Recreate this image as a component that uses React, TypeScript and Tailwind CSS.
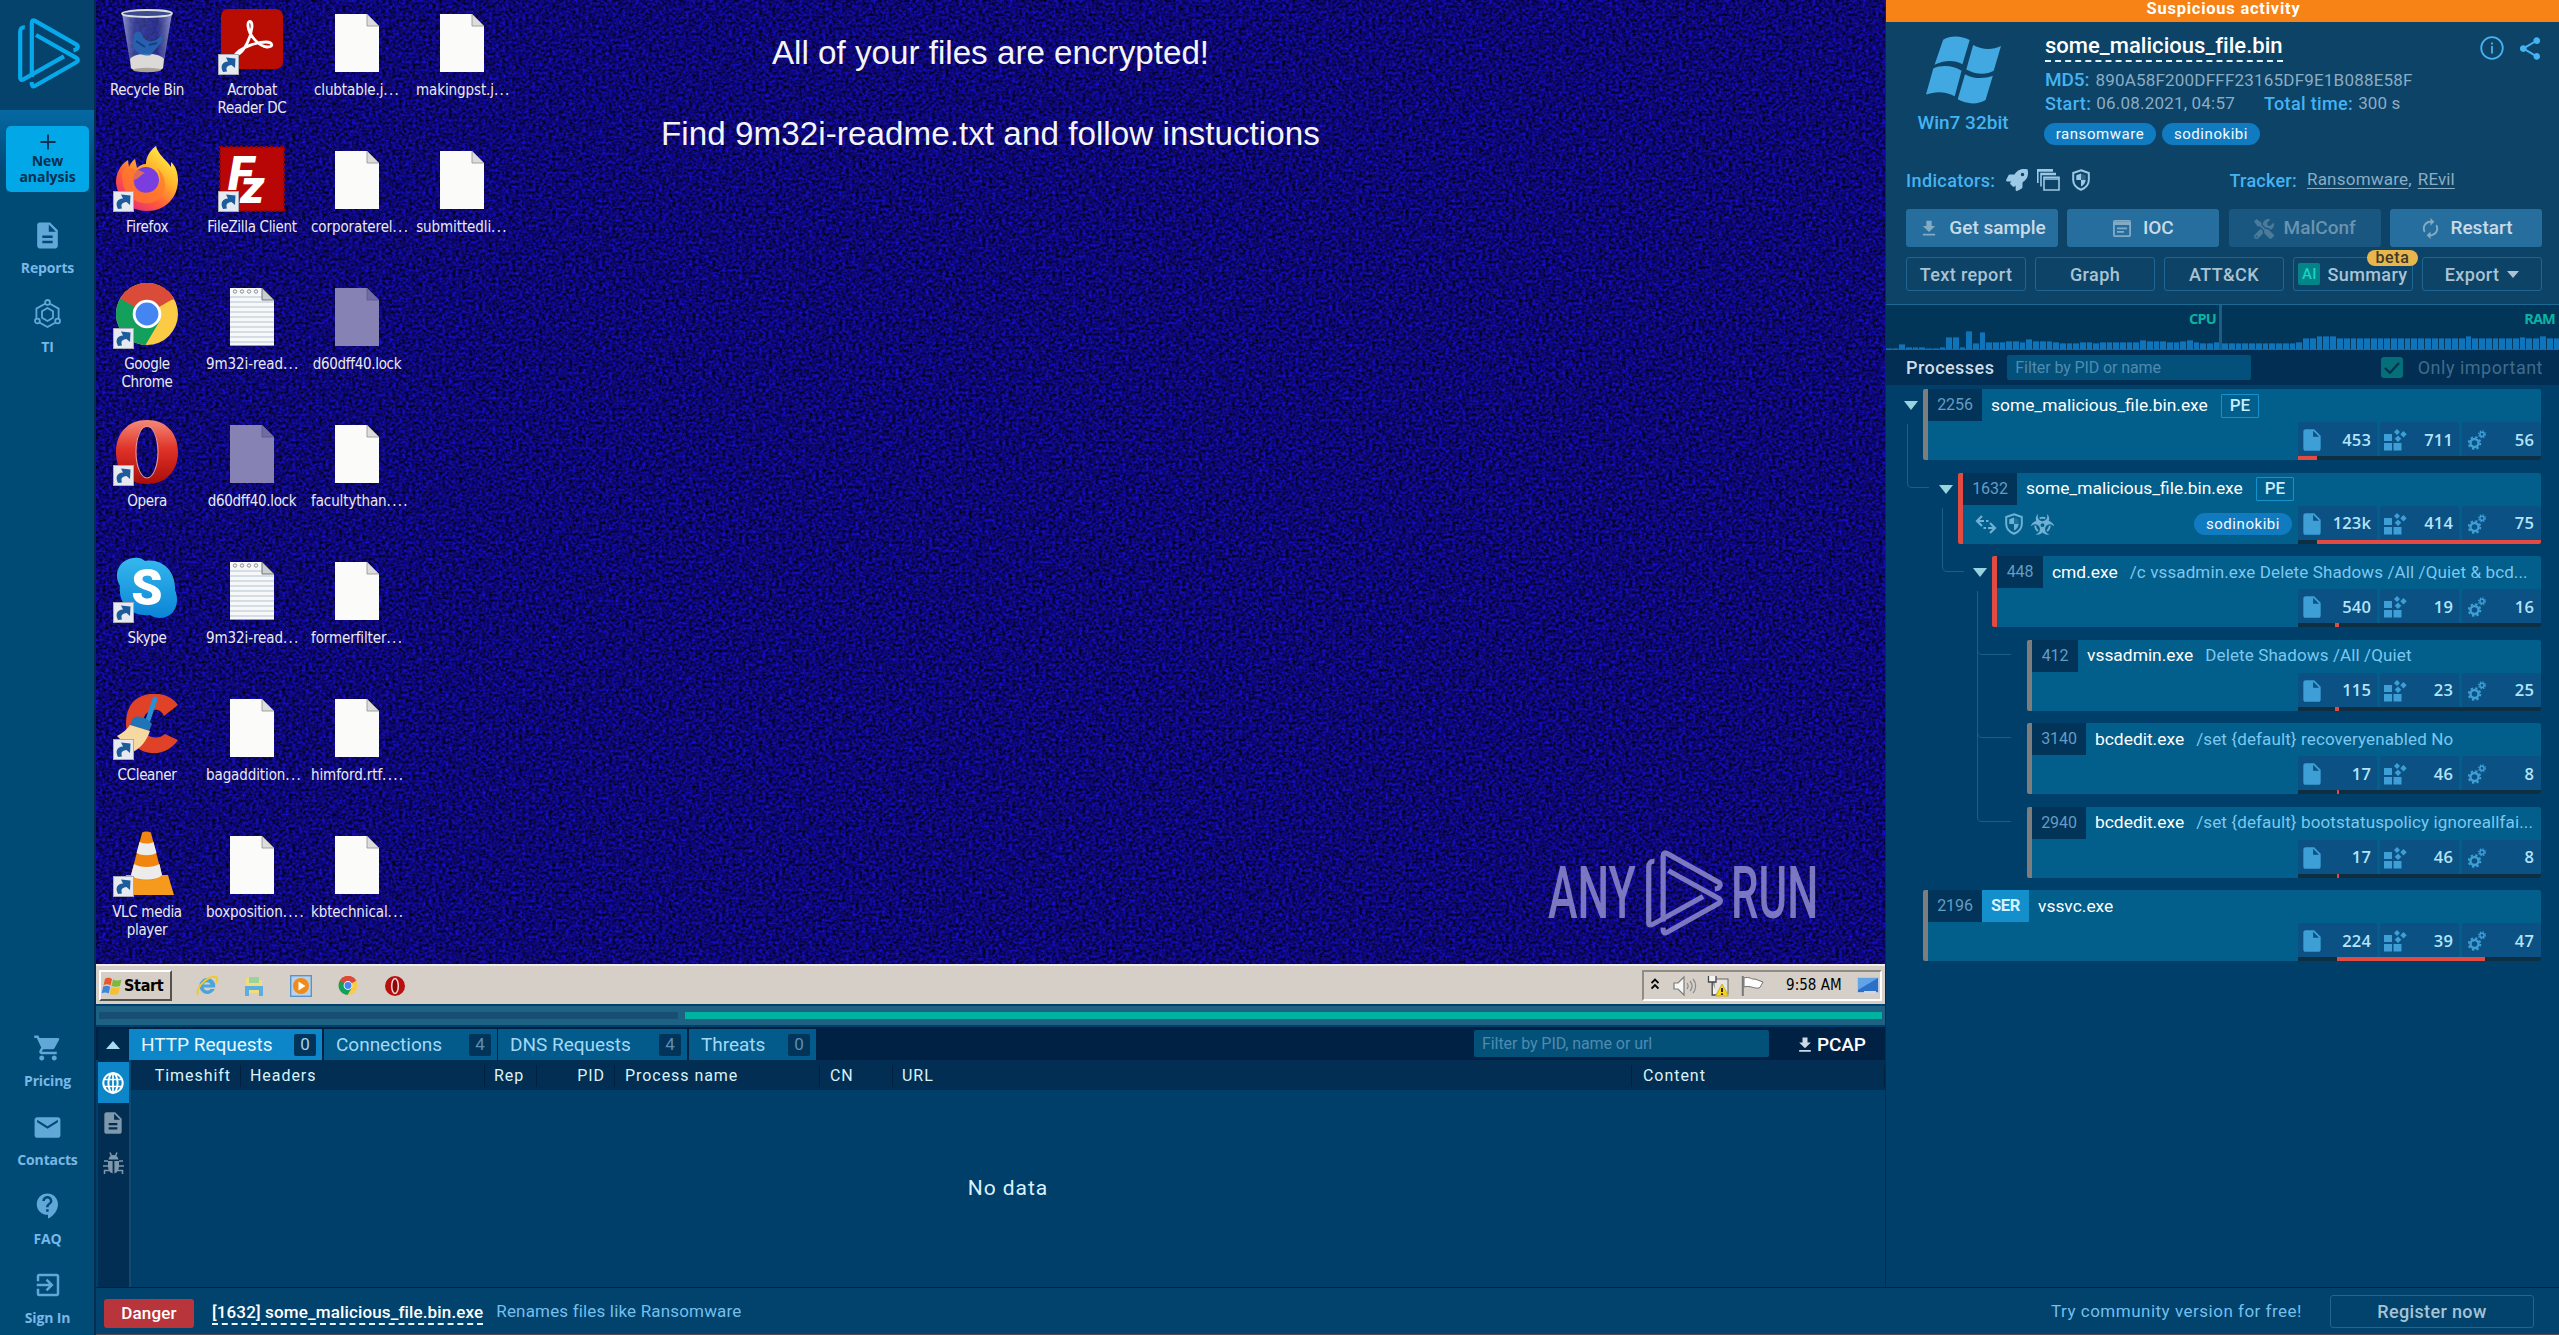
import type { ReactNode } from "react";
import {
  MdAutorenew,
  MdContactSupport,
  MdDescription,
  MdEmail,
  MdExitToApp,
  MdFileDownload,
  MdInsertDriveFile,
  MdShare,
  MdShoppingCart,
} from "react-icons/md";
import { FaBiohazard, FaRocket, FaTools } from "react-icons/fa";

/* ---------- Brand ---------- */

function PlayLogo({ className }: { className: string }) {
  return (
    <svg viewBox="0 0 62 71" className={className} fill="none" stroke="currentColor" strokeWidth="4.2" strokeLinejoin="round" strokeLinecap="butt" preserveAspectRatio="none">
      <path d="M6.8 9.3 C3.5 9 2.2 11 2.2 14 V60 C2.2 62 3.6 62.4 5.4 61.4 L46 38.4" />
      <path d="M13.8 59 V5 C13.8 2.4 15 1.7 17 2.9 L58.5 26.6 C60.6 28 60 31.8 55.4 32.2" />
      <path d="M18 17 L58.3 39.8 C60.4 41 60.4 43 58.3 44.2 L16.8 68 C14.8 69.2 13.6 68 13.8 64" />
    </svg>
  );
}

/* ---------- Left navigation ---------- */

function TiIcon() {
  return (
    <svg viewBox="0 0 27 30" className="h-[30px] w-[27px]" fill="none" stroke="currentColor" strokeWidth="1.8">
      <circle cx="13.5" cy="3.4" r="2.4" />
      <circle cx="3.4" cy="22" r="2.4" />
      <circle cx="23.6" cy="22" r="2.4" />
      <path d="M11 4.8 L2.4 9.6 V19.4 M16 4.8 L24.6 9.6 V19.4 M5.4 23.5 L13.5 28 L21.6 23.5" />
      <path d="M13.5 9 L19 12.3 V18.7 L13.5 22 L8 18.7 V12.3 Z" />
    </svg>
  );
}

function NavItem({ icon, label }: { icon: ReactNode; label: string }) {
  return (
    <div className="flex h-[79px] w-full flex-col items-center pl-px">
      <div className="flex h-[32px] items-center justify-center text-[#61a8d8]">{icon}</div>
      <div className="mt-[7px] text-[14px] leading-[20px] font-bold tracking-[-0.15px] text-[#78b7e6]">{label}</div>
    </div>
  );
}

function Sidebar() {
  return (
    <nav className="flex w-24 shrink-0 flex-col border-r-2 border-[#012d52] bg-[#004a76] font-['Open_Sans',sans-serif]">
      <div className="flex h-[110px] justify-center bg-[#05426c] pt-[18px]">
        <PlayLogo className="mr-[-3px] h-[71px] w-[62px] text-[#06aaeb]" />
      </div>
      <div className="flex h-[104px] w-full flex-col bg-linear-to-b from-[#0669a3] to-[#004a76] to-60% pt-4 pl-1.5">
        <div className="flex h-[66px] w-[83px] flex-col items-center rounded-[5px] bg-[#02a7e8] text-[#053050]">
          <svg viewBox="0 0 16 16" className="mt-2 h-4 w-4" stroke="currentColor" strokeWidth="1.8">
            <path d="M8 0.5 V15.5 M0.5 8 H15.5" />
          </svg>
          <div className="mt-[3px] text-center text-[14px] leading-[16px] font-bold tracking-[-0.05px]">
            New
            <br />
            analysis
          </div>
        </div>
      </div>
      <div className="flex flex-col pt-[5px]">
        <NavItem icon={<MdDescription className="h-[31px] w-[31px]" />} label="Reports" />
        <NavItem icon={<TiIcon />} label="TI" />
      </div>
      <div className="mt-auto -mb-[13px] flex flex-col">
        <NavItem icon={<MdShoppingCart className="h-[30px] w-[30px]" />} label="Pricing" />
        <NavItem icon={<MdEmail className="h-[31px] w-[31px]" />} label="Contacts" />
        <NavItem icon={<MdContactSupport className="h-[30px] w-[30px]" />} label="FAQ" />
        <NavItem icon={<MdExitToApp className="h-[30px] w-[30px]" />} label="Sign In" />
      </div>
    </nav>
  );
}

/* ---------- Remote desktop ---------- */

function Noise() {
  return (
    <svg className="absolute inset-0 h-full w-full">
      <filter id="grain" x="0" y="0" width="100%" height="100%" colorInterpolationFilters="sRGB">
        <feTurbulence type="fractalNoise" baseFrequency="0.3 0.36" numOctaves="3" seed="4" />
        <feColorMatrix values="0.12 0 0 0 -0.01  0.1 0 0 0 -0.02  1.15 0 0 0 -0.125  0 0 0 0 1" />
      </filter>
      <rect width="100%" height="100%" filter="url(#grain)" />
    </svg>
  );
}

function BlankFile() {
  return (
    <svg viewBox="0 0 44 58" className="mt-[5px] h-[58px] w-11">
      <path d="M0 0 H32 L44 12 V58 H0 Z" fill="#fbfbf9" />
      <path d="M32 0 V12 H44 Z" fill="#dcdcdc" stroke="#8f8f8f" strokeWidth="0.8" />
    </svg>
  );
}

function LockFile() {
  return (
    <svg viewBox="0 0 44 58" className="mt-[5px] h-[58px] w-11">
      <path d="M0 0 H32 L44 12 V58 H0 Z" fill="#8682b4" />
      <path d="M32 0 V12 H44 Z" fill="#6f6ba3" stroke="#5a568f" strokeWidth="0.8" />
    </svg>
  );
}

function NoteFile() {
  return (
    <svg viewBox="0 0 44 58" className="mt-[5px] h-[58px] w-11">
      <path d="M0 0 H32 L44 12 V58 H0 Z" fill="#f6f8fa" />
      {[9, 14, 19, 24, 29, 34, 39, 44, 49, 54].map((y) => (
        <path key={y} d={`M0 ${y} H${y < 12 ? 32 : 44}`} stroke="#b5c3cf" strokeWidth="1" />
      ))}
      {[5, 12, 19, 26].map((x) => (
        <circle key={x} cx={x} cy="3.5" r="1.7" fill="none" stroke="#8f8f8f" />
      ))}
      <path d="M32 0 V12 H44 Z" fill="#c9ced3" stroke="#6e7478" strokeWidth="1" />
      <path d="M0 57.5 H44" stroke="#9aa1a6" />
    </svg>
  );
}

function RecycleBin() {
  return (
    <svg viewBox="0 0 52 64" className="h-16 w-[52px]">
      <defs>
        <linearGradient id="binGlass" x1="0" y1="0" x2="1" y2="0">
          <stop offset="0" stopColor="#b9c6e2" stopOpacity="0.75" />
          <stop offset="0.25" stopColor="#5d6cae" stopOpacity="0.55" />
          <stop offset="0.7" stopColor="#43509c" stopOpacity="0.55" />
          <stop offset="1" stopColor="#b4bfdb" stopOpacity="0.75" />
        </linearGradient>
      </defs>
      <path d="M1 4 L10 59 C14 64 38 64 42 59 L51 4 Z" fill="url(#binGlass)" />
      <path d="M9 50 C14 43 38 43 43 50 L42 59 C38 64 14 64 10 59 Z" fill="#dcdad6" />
      <path d="M13 26 C15 20 21 22 22 28 C26 34 34 34 40 27 L42 30 C36 40 32 42 30 46 C22 48 14 44 12 36 Z" fill="#2467b4" opacity="0.85" />
      <path d="M15 32 L24 38 M28 36 L36 34" stroke="#123f86" strokeWidth="2" />
      <ellipse cx="26" cy="4.5" rx="25" ry="3.5" fill="#3d4a8c" stroke="#d9dde4" strokeWidth="1.8" />
      <ellipse cx="26" cy="61" rx="14" ry="2.2" fill="#a9a49a" />
    </svg>
  );
}

function Acrobat() {
  return (
    <svg viewBox="0 0 62 60" className="h-[60px] w-[62px]">
      <rect width="62" height="60" rx="7" fill="#b90d04" />
      <path d="M16 46 C24 42 30 28 31 18 C31.4 11 26.4 10.6 27 17 C28 27 38 37 46 38 C53 38.4 52 33 45 33 C36 33 25 37 18 42 C13 46 13 48 16 46 Z" fill="none" stroke="#fff" strokeWidth="2.8" />
    </svg>
  );
}

function Firefox() {
  return (
    <svg viewBox="0 0 64 66" className="h-[66px] w-16">
      <defs>
        <linearGradient id="ffBody" x1="0.85" y1="0.1" x2="0.2" y2="0.95">
          <stop offset="0" stopColor="#fff04a" />
          <stop offset="0.35" stopColor="#ffb02a" />
          <stop offset="0.68" stopColor="#ff5a3a" />
          <stop offset="1" stopColor="#e92a7a" />
        </linearGradient>
      </defs>
      <path d="M41 0 C32 7 31 14 31 18 C27 18 24 20 22 22 L20 13 C17 15 15 18 14 21 L13 14 C4 20 1 28 1 37 C3 54 15 65 32 65 C50 65 63 52 63 34 C63 28 61 20 56 16 L56 21 C52 14 43 9 41 0 Z" fill="url(#ffBody)" />
      <circle cx="31" cy="34" r="13" fill="#7a3ee0" />
      <path d="M8 24 C14 20 24 24 30 27 C25 29 24 33 19 34 C19 38 20 41 22 43 C28 50 42 47 44 36 C46 30 44 26 42 22 C54 32 53 53 36 57 C16 60 4 42 8 24 Z" fill="#ff7a2c" opacity="0.75" />
    </svg>
  );
}

function FileZilla() {
  return (
    <svg viewBox="0 0 66 66" className="h-[66px] w-[66px]">
      <rect x="1" y="1" width="64" height="64" fill="#b80606" stroke="#8d0505" strokeWidth="2" strokeDasharray="3 2" />
      <text x="9" y="44" fontFamily="Roboto, sans-serif" fontSize="48" fontWeight="900" fontStyle="italic" fill="#fff">
        F<tspan dx="-13" dy="13">z</tspan>
      </text>
    </svg>
  );
}

function Chrome({ className }: { className: string }) {
  return (
    <svg viewBox="0 0 62 62" className={className}>
      <circle cx="31" cy="31" r="31" fill="#fccb46" />
      <path d="M31 31 L4.2 15.5 A31 31 0 0 1 57.8 15.5 Z" fill="#db4b3a" />
      <path d="M31 16.5 H58.6 L57.8 15.5 A31 31 0 0 0 4.2 15.5 L18.4 38.2 Z" fill="#db4b3a" />
      <path d="M31 31 L4.2 15.5 A31 31 0 0 0 29.5 62 L43.6 38.2 Z" fill="#13a05c" />
      <circle cx="31" cy="31" r="14.3" fill="#fff" />
      <circle cx="31" cy="31" r="11.4" fill="#4585f2" />
    </svg>
  );
}

function Opera() {
  return (
    <svg viewBox="0 0 62 64" className="h-16 w-[62px]">
      <defs>
        <linearGradient id="opRing" x1="0" y1="0" x2="0" y2="1">
          <stop offset="0" stopColor="#f58a78" />
          <stop offset="0.45" stopColor="#e03228" />
          <stop offset="1" stopColor="#a90d0a" />
        </linearGradient>
      </defs>
      <path fillRule="evenodd" d="M31 0 C50 0 62 13 62 32 C62 51 50 64 31 64 C12 64 0 51 0 32 C0 13 12 0 31 0 Z M31 7 C23 7 20 18 20 32 C20 46 23 58 31 58 C39 58 42 46 42 32 C42 18 39 7 31 7 Z" fill="url(#opRing)" />
      <ellipse cx="31" cy="32" rx="11" ry="26" fill="none" stroke="#ef8f82" strokeWidth="1.2" />
    </svg>
  );
}

function Skype() {
  return (
    <svg viewBox="0 0 62 62" className="h-[62px] w-[62px]">
      <defs>
        <linearGradient id="skBody" x1="0" y1="0" x2="0" y2="1">
          <stop offset="0" stopColor="#35b8ee" />
          <stop offset="1" stopColor="#0a84d6" />
        </linearGradient>
      </defs>
      <path d="M17 1 C22 0 26 1 29 4 C46 1 60 14 59 33 C64 44 60 61 44 61 C40 61 37 60 34 58 C16 60 2 48 4 29 C-3 18 2 3 17 1 Z" fill="url(#skBody)" />
      <text x="31" y="48" textAnchor="middle" fontFamily="Roboto, sans-serif" fontSize="50" fontWeight="900" fill="#fff">S</text>
    </svg>
  );
}

function CCleaner() {
  return (
    <svg viewBox="0 0 64 60" className="h-[60px] w-16">
      <path d="M63 11 C54 -2 33 -4 20 6 C8 16 8 42 20 52 C34 64 54 60 63 46 L50 40 C43 46 32 44 29 36 C26 26 30 17 38 16 C44 15 47 18 49 22 Z" fill="#df4227" />
      <path d="M40 5 L33 26" stroke="#2b8fd3" strokeWidth="5" strokeLinecap="round" />
      <path d="M18 24 C23 20 33 24 37 30 L34 37 L15 31 Z" fill="#1f74b8" />
      <path d="M15 31 L35 37 C32 46 26 54 18 58 L2 42 C8 39 12 35 15 31 Z" fill="#f5d9a0" />
    </svg>
  );
}

function Vlc() {
  return (
    <svg viewBox="0 0 54 64" className="h-16 w-[54px]">
      <path d="M6 44 H48 L54 64 H0 Z" fill="#f59a1c" />
      <path d="M22 2 C23 0 30 0 31 2 L42 44 C38 51 15 51 11 44 Z" fill="#f2850f" />
      <path d="M19.5 11 C24 13 29 13 33.500 11 L36.500 22 C31 25 22 25 16.500 22 Z" fill="#ececec" />
      <path d="M14 33 C20 37 33 37 39.500 33 L42 44 C38 50 15 50 11 44 Z" fill="#ececec" />
    </svg>
  );
}

function Shortcut() {
  return (
    <svg viewBox="0 0 21 21" className="absolute bottom-0 left-[-1px] h-[21px] w-[21px]">
      <rect x="0.5" y="0.5" width="20" height="20" fill="#e6e9ef" stroke="#a8abb5" />
      <path d="M5 18 C2 12 4 8 10 7.500 L8 3.500 L17.500 4.500 L17 14 L13.500 11 C9 11.500 7.500 13.500 9 17.500 Z" fill="#1d5c9c" />
    </svg>
  );
}

type DesktopItem = { label: string; col: number; row: number; icon: ReactNode; shortcut?: boolean };

const desktop: DesktopItem[] = [
  { label: "Recycle Bin", col: 0, row: 0, icon: <RecycleBin /> },
  { label: "Firefox", col: 0, row: 1, icon: <Firefox />, shortcut: true },
  { label: "Google Chrome", col: 0, row: 2, icon: <Chrome className="h-[62px] w-[62px]" />, shortcut: true },
  { label: "Opera", col: 0, row: 3, icon: <Opera />, shortcut: true },
  { label: "Skype", col: 0, row: 4, icon: <Skype />, shortcut: true },
  { label: "CCleaner", col: 0, row: 5, icon: <CCleaner />, shortcut: true },
  { label: "VLC media player", col: 0, row: 6, icon: <Vlc />, shortcut: true },
  { label: "Acrobat Reader DC", col: 1, row: 0, icon: <Acrobat />, shortcut: true },
  { label: "FileZilla Client", col: 1, row: 1, icon: <FileZilla />, shortcut: true },
  { label: "9m32i-read...", col: 1, row: 2, icon: <NoteFile /> },
  { label: "d60dff40.lock", col: 1, row: 3, icon: <LockFile /> },
  { label: "9m32i-read...", col: 1, row: 4, icon: <NoteFile /> },
  { label: "bagaddition...", col: 1, row: 5, icon: <BlankFile /> },
  { label: "boxposition....", col: 1, row: 6, icon: <BlankFile /> },
  { label: "clubtable.j...", col: 2, row: 0, icon: <BlankFile /> },
  { label: "corporaterel...", col: 2, row: 1, icon: <BlankFile /> },
  { label: "d60dff40.lock", col: 2, row: 2, icon: <LockFile /> },
  { label: "facultythan....", col: 2, row: 3, icon: <BlankFile /> },
  { label: "formerfilter...", col: 2, row: 4, icon: <BlankFile /> },
  { label: "himford.rtf....", col: 2, row: 5, icon: <BlankFile /> },
  { label: "kbtechnical...", col: 2, row: 6, icon: <BlankFile /> },
  { label: "makingpst.j...", col: 3, row: 0, icon: <BlankFile /> },
  { label: "submittedli...", col: 3, row: 1, icon: <BlankFile /> },
];

function IconLabel({ text }: { text: string }) {
  const cut = text.search(/\.{3,}$/);
  if (cut < 0) return <span className="tracking-[-0.32px]">{text}</span>;
  return (
    <span className="tracking-[-0.1px] whitespace-nowrap">
      {text.slice(0, cut)}
      <span className="tracking-[1.3px]">{text.slice(cut)}</span>
    </span>
  );
}

function Taskbar() {
  return (
    <div className="relative flex h-10 items-center border-t-2 border-[#f1eeea] bg-[#d5cfc7] px-[3px] font-['DejaVu_Sans_Condensed','DejaVu_Sans',sans-serif] text-black">
      <div className="mt-px flex h-[31px] w-[73px] items-center border-2 border-t-white border-r-[#55524e] border-b-[#55524e] border-l-white">
        <svg viewBox="0 0 22 20" className="h-5 w-[22px]">
          <path d="M4 3 C7 1 9 2 11 3 L9.500 9.500 C7 8 5 8 2.500 9.300 Z" fill="#e8582a" />
          <path d="M12 3.500 C15 5 18 4.500 20.500 3.500 L19 10 C16 11 13 11 10.500 10 Z" fill="#7fb93c" />
          <path d="M2.200 10.500 C5 9.300 7 9.500 9.200 10.700 L7.700 17.500 C5 16 3 16.200 0.700 17.300 Z" fill="#3f86d8" />
          <path d="M10.200 11.300 C13 12.500 16 12.300 18.700 11.200 L17.200 18 C14 19 11.500 19 8.700 18 Z" fill="#f5bf2f" />
        </svg>
        <span className="ml-px text-[16px] leading-none font-bold tracking-[-0.3px]">Start</span>
      </div>
      <div className="mt-px ml-[24px] flex items-center gap-[25px]">
        <svg viewBox="0 0 22 22" className="h-[22px] w-[22px]">
          <path d="M11 3 A8 8 0 1 0 18.800 14 H14.500 A4 4 0 0 1 7.500 12.500 H19.200 A8 8 0 0 0 11 3 Z M7.600 9.500 A3.700 3.700 0 0 1 14.500 9.500 Z" fill="#49a5e0" fillRule="evenodd" />
          <path d="M2 20 C-1 13 12 0 20 2 C22 3 21 6 20 8" fill="none" stroke="#f0c832" strokeWidth="2" />
        </svg>
        <svg viewBox="0 0 22 22" className="h-[22px] w-[22px]">
          <path d="M3 3 H9 L11 5 H19 V18 H3 Z" fill="#f2dc7c" />
          <path d="M6 2 H16 V8 H6 Z" fill="#9bd49b" />
          <path d="M2 11 H20 V21 H16 V15 H6 V21 H2 Z" fill="#5aaee0" />
        </svg>
        <svg viewBox="0 0 22 22" className="h-[22px] w-[22px]">
          <rect x="0.700" y="0.700" width="20.600" height="20.600" fill="#b9d2ec" stroke="#5a93c8" strokeWidth="1.400" />
          <circle cx="11" cy="11" r="8" fill="#f28a17" />
          <path d="M8.500 6.500 L15.500 11 L8.500 15.500 Z" fill="#fff" />
        </svg>
        <Chrome className="h-[19px] w-[22px]" />
        <svg viewBox="0 0 22 22" className="h-[22px] w-[22px]">
          <circle cx="11" cy="11" r="10" fill="#b80f0f" />
          <ellipse cx="11" cy="11" rx="3.300" ry="7.500" fill="#8c0808" stroke="#f0dcd8" strokeWidth="1.500" />
        </svg>
      </div>
      <div className="mt-px ml-auto flex h-[31px] w-[240px] items-center border-2 border-t-[#8f8b85] border-r-white border-b-white border-l-[#8f8b85] pl-[7px]">
        <svg viewBox="0 0 8 12" className="-mt-[4px] h-3 w-2" fill="none" stroke="#000" strokeWidth="1.800">
          <path d="M0.500 5 L4 1.500 L7.500 5 M0.500 10.500 L4 7 L7.500 10.500" />
        </svg>
        <svg viewBox="0 0 24 22" className="ml-[14px] h-[22px] w-6" fill="none" stroke="#7b7b7b" strokeWidth="1.200">
          <path d="M1 8 H5 L11 2 V20 L5 14 H1 Z" fill="#f7f7f7" />
          <path d="M14 8 C15.500 10 15.500 12 14 14 M17 6 C19.500 9 19.500 13 17 16 M20 4 C23.500 8 23.500 14 20 18" stroke="#8a8a8a" />
        </svg>
        <svg viewBox="0 0 22 22" className="ml-[10px] h-[22px] w-[22px]">
          <rect x="7" y="4" width="14" height="15" fill="#e6e6e6" stroke="#666" />
          <path d="M1.500 1 V7 H9 V1 M5.200 7 V20 H10" fill="#f4f4f4" stroke="#444" strokeWidth="1.300" />
          <path d="M15 9 L21.500 21 H8.500 Z" fill="#f6d51e" stroke="#c7a50a" strokeWidth="0.800" />
          <path d="M15 13 V17 M15 18.300 V20" stroke="#000" strokeWidth="1.600" />
        </svg>
        <svg viewBox="0 0 23 22" className="ml-[12px] h-[22px] w-[23px]">
          <path d="M3 3 C8 1 11 5 14 4 L22 7 C20 10 20 12 18 13 C13 14 9 10 3 12 Z" fill="#fff" stroke="#6f6f6f" />
          <path d="M1.800 1 V21" stroke="#777" strokeWidth="2" />
        </svg>
        <span className="ml-[22px] text-[15px] leading-none tracking-[0.05px]">9:58 AM</span>
        <svg viewBox="0 0 22 18" className="ml-[15px] h-[18px] w-[22px]">
          <rect x="0.500" y="0.500" width="21" height="15" fill="#2c6fc4" stroke="#b9c6d8" />
          <path d="M1 1 H21 L1 13 Z" fill="#5fa4e8" />
          <rect x="7" y="14" width="12" height="3" fill="#cfd6df" />
        </svg>
      </div>
    </div>
  );
}

function RemoteDesktop() {
  return (
    <section className="flex h-[1004px] flex-col">
      <div className="relative h-[964px] overflow-hidden bg-[#0d0a74]">
        <Noise />
        <div className="relative flex flex-col items-center pt-[35px] font-['Liberation_Sans',sans-serif] text-[33.2px] leading-[36px] text-[#f4f4fb]">
          <p>All of your files are encrypted!</p>
          <p className="mt-[45px] tracking-[0.05px]">Find 9m32i-readme.txt and follow instuctions</p>
        </div>
        {desktop.map((d) => (
          <div
            key={`${d.col}-${d.row}`}
            className="absolute flex w-[106px] flex-col items-center"
            style={{ left: d.col * 105 - 2, top: 9 + d.row * 137 }}
          >
            <div className="relative flex h-[66px] w-[66px] items-start justify-center">
              {d.icon}
              {d.shortcut && <Shortcut />}
            </div>
            <div className="mt-[6px] max-w-[100px] px-1 text-center font-['DejaVu_Sans_Condensed','DejaVu_Sans',sans-serif] text-[15px] leading-[18px] text-[#e9e9f4]">
              <IconLabel text={d.label} />
            </div>
          </div>
        ))}
        <div className="absolute top-[850px] left-[1452px] flex items-center text-[#8f8bd0] opacity-85">
          <span className="flex w-[90px] font-['Roboto',sans-serif] text-[73px] leading-[86px] font-medium">
            <span className="origin-left scale-x-[0.61]">ANY</span>
          </span>
          <PlayLogo className="ml-[8px] h-[86px] w-[77px]" />
          <span className="ml-[8px] flex w-[90px] font-['Roboto',sans-serif] text-[73px] leading-[86px] font-medium">
            <span className="origin-left scale-x-[0.6]">RUN</span>
          </span>
        </div>
      </div>
      <Taskbar />
    </section>
  );
}

/* ---------- Network panel ---------- */

function GlobeIcon() {
  return (
    <svg viewBox="0 0 22 22" className="mr-px h-[22px] w-[22px]" fill="none" stroke="#fff" strokeWidth="2">
      <circle cx="11" cy="11" r="9.700" />
      <ellipse cx="11" cy="11" rx="4.600" ry="9.700" />
      <path d="M1.500 7.500 H20.500 M1.500 14.500 H20.500 M11 1.500 V20.500" strokeWidth="1.700" />
    </svg>
  );
}

function BugIcon() {
  return (
    <svg viewBox="0 0 21 23" className="mr-px h-[23px] w-[21px] text-[#8098ab]" stroke="currentColor" strokeWidth="1.500" fill="none">
      <path d="M5.500 7.500 C6 4.500 8 3 10.500 3 S15 4.500 15.500 7.500 Z" fill="currentColor" stroke="none" />
      <path d="M5 9 H9.600 V21.500 C6.500 20.500 5 18 5 14 Z M16 9 H11.400 V21.500 C14.500 20.500 16 18 16 14 Z" fill="currentColor" stroke="none" />
      <path d="M7 0.500 L8.500 4 M14 0.500 L12.500 4 M1 9 H5 M20 9 H16 M0 14 H5 M21 14 H16 M1.500 22 V18.500 H6 M19.500 22 V18.500 H15" />
    </svg>
  );
}

function Tab({ className, label, count, active }: { className: string; label: string; count: string; active?: boolean }) {
  return (
    <div className={`flex h-[31px] items-center justify-between pr-[6px] pl-3 text-[19px] tracking-[-0.02px] ${active ? "bg-[#0c86c9] text-[#e9f7ff]" : "bg-[#025b8b] text-[#a3d8f5]"} ${className}`}>
      <span className="pt-px">{label}</span>
      <span className={`flex h-[22px] w-[22px] items-center justify-center rounded-[2px] bg-[#02345a] text-[17px] ${active ? "text-[#a9d3ee]" : "text-[#5d8fb5]"}`}>{count}</span>
    </div>
  );
}

function NetworkPanel() {
  const cell = "flex h-[22px] items-center border-r border-[#01203f]";
  return (
    <section className="flex min-h-0 flex-1 flex-col">
      <div className="mt-[2px] flex h-[19px] items-center gap-[7px] bg-[#1e6283] pr-[3px] pl-[3px]">
        <div className="h-[7px] w-[579px] bg-[#174e72]" />
        <div className="h-[7px] flex-1 bg-[#00b3a1]" />
      </div>
      <div className="mt-[2px] flex h-[33px] items-start border-t-2 border-[#012144] bg-[#002144] pl-[2px]">
        <div className="flex h-[31px] w-[31px] items-center justify-center bg-[#012b4e] pr-px">
          <svg viewBox="0 0 14 8" className="h-2 w-[14px] fill-[#a9dcf2]">
            <path d="M7 0 L14 8 H0 Z" />
          </svg>
        </div>
        <Tab className="w-[193px]" label="HTTP Requests" count="0" active />
        <Tab className="ml-[2px] w-[173px]" label="Connections" count="4" />
        <Tab className="ml-px w-[189px]" label="DNS Requests" count="4" />
        <Tab className="ml-[2px] w-[127px]" label="Threats" count="0" />
        <div className="mt-px ml-auto flex h-[27px] w-[295px] items-center rounded-[2px] bg-[#035079] pl-2 text-[16px] tracking-[-0.08px] text-[#4f8bb0]">
          Filter by PID, name or url
        </div>
        <div className="flex h-[31px] w-[116px] items-center justify-start pt-px pl-[26px] text-[19px] font-medium text-white">
          <MdFileDownload className="mr-[2px] h-[20px] w-[20px] text-[#ccd8e2]" />
          <span className="tracking-[-0.1px]">PCAP</span>
        </div>
      </div>
      <div className="flex min-h-0 flex-1">
        <div className="ml-[2px] flex w-[31px] flex-col items-center bg-[#012e52] pt-[2px]">
          <div className="flex h-[41px] w-full items-center justify-center bg-[#0c86c9]">
            <GlobeIcon />
          </div>
          <MdDescription className="mt-[7px] mr-px h-[26px] w-[26px] text-[#8098ab]" />
          <div className="mt-[16px]">
            <BugIcon />
          </div>
        </div>
        <div className="flex flex-1 flex-col border-l-2 border-[#12496f]">
          <div className="flex h-[30px] items-center bg-[#012e52] pt-px text-[16px] tracking-[0.95px] text-[#d9f3fb]">
            <div className={`${cell} w-[110px] justify-end pr-[9px]`}>Timeshift</div>
            <div className={`${cell} w-[244px] pl-[9px]`}>Headers</div>
            <div className={`${cell} w-[52px] pl-[9px]`}>Rep</div>
            <div className={`${cell} w-[78px] justify-end pr-[9px]`}>PID</div>
            <div className={`${cell} w-[205px] pl-[10px]`}>Process name</div>
            <div className={`${cell} w-[73px] pl-[10px]`}>CN</div>
            <div className={`${cell} w-[739px] pl-[9px]`}>URL</div>
            <div className={`${cell} flex-1 pl-[11px]`}>Content</div>
          </div>
          <div className="flex flex-1 items-center justify-center text-[21px] tracking-[0.95px] text-[#d9f3fb]">No data</div>
        </div>
      </div>
    </section>
  );
}

/* ---------- Bottom bar ---------- */

function BottomBar() {
  return (
    <footer className="flex h-[48px] items-center border-t border-b border-t-[#012144] border-b-[#5b4a55] bg-[#01436d] pr-[25px] pl-2 text-[17px] text-[#74bfec]">
      <div className="mt-[4px] flex h-[29px] w-[90px] items-center justify-center rounded-[3px] bg-[#b9353c] pt-px font-medium tracking-[0.2px] text-white">Danger</div>
      <div className="mt-[4px] ml-[18px] border-b-2 border-dashed border-[#e8f5fc] leading-[21px] font-medium tracking-[0.14px] text-white">[1632] some_malicious_file.bin.exe</div>
      <div className="mt-[2px] ml-[13px] tracking-[0.17px]">Renames files like Ransomware</div>
      <div className="mt-[2px] ml-auto tracking-[0.5px]">Try community version for free!</div>
      <div className="mt-px ml-[28px] flex h-[33px] w-[204px] items-center justify-center rounded-[3px] border border-[#216594] text-[18px] font-medium tracking-[0.35px] text-[#a6c2d3]">Register now</div>
    </footer>
  );
}

/* ---------- Analysis panel ---------- */

function WindowsLogo() {
  return (
    <svg viewBox="95 107 175 203" preserveAspectRatio="none" className="h-[68px] w-[75px] fill-[#42a8e2]">
      <path d="M135 118 C153 104 178 106 197 119 L180 191 C160 177 135 180 115 193 Z" />
      <path d="M205 134 C228 150 250 149 270 137 L253 211 C235 224 210 222 189 207 Z" />
      <path d="M112 204 C132 192 160 195 178 211 L162 287 C140 271 115 272 95 282 Z" />
      <path d="M186 221 C205 235 230 236 251 226 L234 298 C215 313 190 311 169 296 Z" />
    </svg>
  );
}

function ShieldIcon({ className }: { className: string }) {
  return (
    <svg viewBox="0 0 18 22" className={className}>
      <path d="M9 1.200 L16.800 4 V11 C16.800 15.500 13.500 19 9 20.800 C4.500 19 1.200 15.500 1.200 11 V4 Z" fill="none" stroke="currentColor" strokeWidth="2" />
      <path d="M9 4.500 V11 H4.300 V6.300 Z M9 11 H13.700 C13.400 14.200 11.500 16.300 9 17.500 Z" fill="currentColor" />
      <path d="M9 4.500 L13.700 6.300 V11 H9 Z" fill="currentColor" opacity="0.250" />
    </svg>
  );
}

function StackIcon() {
  return (
    <svg viewBox="0 0 23 22" className="h-[22px] w-[23px]" fill="none" stroke="currentColor" strokeWidth="1.600">
      <path d="M0.800 14 V0.800 H16 M0.800 2 H16" />
      <path d="M4 17.500 V4.500 H19 M4 5.500 H19" />
      <path d="M7 8.200 H22 V21 H7 Z M7 10 H22" />
    </svg>
  );
}

function IocIcon() {
  return (
    <svg viewBox="0 0 18 17" className="h-[17px] w-[18px]" fill="none" stroke="currentColor" strokeWidth="1.800">
      <rect x="0.900" y="0.900" width="16.200" height="15.200" rx="1" />
      <path d="M1 3.500 H17" strokeWidth="3" />
      <path d="M4 8.300 H14 M4 11.800 H11" />
    </svg>
  );
}

const tag = "flex h-[22px] items-center justify-center rounded-full bg-[#117bc1] text-[15px] tracking-[0.55px] text-[#f2faff]";

function Header() {
  const dark = "flex h-[38px] w-[152px] items-center justify-center rounded-[3px] pt-px text-[19px] font-medium";
  const line = "relative flex h-[34px] w-[120px] items-center justify-center rounded-[3px] border border-[#216594] text-[18px] font-medium tracking-[0.4px] text-[#a9c3d4]";
  return (
    <header className="flex h-[304px] flex-col bg-[#0c4367]">
      <div className="flex h-[22px] items-center justify-center bg-[#f78316] pb-[3px] pl-[2px] text-[16.4px] font-bold tracking-[0.8px] text-white">Suspicious activity</div>
      <div className="flex h-[123px] pr-[18px]">
        <div className="flex w-[158px] flex-col items-center pt-[14px] pr-1">
          <WindowsLogo />
          <div className="mt-[7px] text-[19px] leading-[24px] font-medium text-[#45b3f2]">Win7 32bit</div>
        </div>
        <div className="flex flex-1 flex-col items-start pl-px text-[17px] text-[#8badc4]">
          <div className="mt-[10px] h-[30px] border-b-2 border-dashed border-[#e6f3fa] text-[22px] leading-[28px] font-medium tracking-[0.03px] text-white">some_malicious_file.bin</div>
          <div className="mt-[7px] flex h-[23px] items-center">
            <span className="mr-[6px] text-[19px] font-medium tracking-[-0.1px] text-[#45b3f2]">MD5:</span>
            <span className="tracking-[0.2px]">890A58F200DFFF23165DF9E1B088E58F</span>
          </div>
          <div className="flex h-[23px] items-center">
            <span className="mr-[5px] text-[18px] font-medium tracking-[0.35px] text-[#45b3f2]">Start:</span>
            <span className="tracking-[0.2px]">06.08.2021, 04:57</span>
            <span className="mr-[5px] ml-[29px] text-[18px] font-medium tracking-[0.35px] text-[#45b3f2]">Total time:</span>
            <span className="tracking-[0.1px]">300 s</span>
          </div>
          <div className="mt-[8px] -ml-px flex gap-[6px]">
            <span className={`${tag} w-[112px]`}>ransomware</span>
            <span className={`${tag} w-[98px]`}>sodinokibi</span>
          </div>
        </div>
        <div className="flex gap-[15px] pt-[14px]">
          <svg viewBox="0 0 24 24" className="h-6 w-6" fill="none" stroke="#45b3f2" strokeWidth="1.800">
            <circle cx="12" cy="12" r="10.800" />
            <path d="M12 10 V17.500 M12 6.500 V8.600" />
          </svg>
          <MdShare className="mr-[-3px] ml-[-3px] h-[27px] w-[28px] -translate-y-px text-[#45b3f2]" />
        </div>
      </div>
      <div className="mt-[23px] flex h-6 items-center pl-5 text-[18px] text-[#8badc4]">
        <span className="font-medium tracking-[0.38px] text-[#45b3f2]">Indicators:</span>
        <span className="ml-[10px] flex items-center text-[#9cc9e6]">
          <FaRocket className="h-[22px] w-[22px]" />
          <span className="ml-[9px]"><StackIcon /></span>
          <ShieldIcon className="ml-[12px] h-[22px] w-[18px]" />
        </span>
        <span className="ml-[140px] font-medium tracking-[0.25px] text-[#45b3f2]">Tracker:</span>
        <span className="ml-[10px] text-[17px] tracking-[0.22px]">
          <u className="underline-offset-[3px]">Ransomware</u>,
        </span>
        <u className="ml-[6px] text-[17px] tracking-[0.1px] underline-offset-[3px]">REvil</u>
      </div>
      <div className="mt-[17px] flex justify-between pr-[17px] pl-5 text-[#c9dbe7]">
        <div className={`${dark} bg-[#266e9e]`}>
          <MdFileDownload className="mr-[9px] h-[21px] w-[22px] text-[#84abc5]" />
          Get sample
        </div>
        <div className={`${dark} bg-[#266e9e]`}>
          <span className="mr-3 text-[#84abc5]"><IocIcon /></span>
          IOC
        </div>
        <div className={`${dark} bg-[#195780] text-[#6a93af]`}>
          <FaTools className="mr-[10px] h-5 w-5 text-[#4b7a9a]" />
          MalConf
        </div>
        <div className={`${dark} bg-[#266e9e]`}>
          <MdAutorenew className="mr-[8px] h-[23px] w-[23px] text-[#84abc5]" />
          Restart
        </div>
      </div>
      <div className="mt-[10px] flex justify-between pr-[17px] pl-5">
        <div className={line}>Text report</div>
        <div className={line}>Graph</div>
        <div className={line}>ATT&amp;CK</div>
        <div className={line}>
          <span className="mr-[7px] flex h-[22px] w-[22px] items-center justify-center rounded-[2px] bg-[#048489] text-[15px] text-[#18d3c3]">AI</span>
          Summary
          <span className="absolute -top-[8px] -right-[6px] flex h-[16px] w-[51px] items-center justify-center rounded-full bg-[#e8b64d] text-[16px] tracking-[0.6px] text-[#3d3a28]">beta</span>
        </div>
        <div className={line}>
          Export
          <svg viewBox="0 0 12 7" className="ml-[8px] h-[7px] w-3 fill-[#a9c3d4]">
            <path d="M0 0 H12 L6 7 Z" />
          </svg>
        </div>
      </div>
    </header>
  );
}

const cpu = [1, 1, 5, 2, 2, 2, 1, 1, 2, 12, 12, 2, 18, 6, 17, 7, 7, 7, 8, 8, 7, 10, 8, 8, 8, 7, 6, 6, 6, 7, 7, 6, 7, 7, 7, 7, 7, 7, 9, 8, 8, 8, 7, 7, 8, 9, 7, 6, 6, 7];
const ram = [6, 6, 6, 6, 6, 6, 6, 6, 6, 6, 6, 7, 11, 11, 13, 13, 13, 11, 11, 11, 11, 11, 11, 11, 11, 11, 11, 11, 11, 11, 11, 11, 11, 11, 11, 11, 13, 11, 11, 11, 11, 11, 11, 11, 12, 11, 11, 13, 11, 11];

function Bars({ data }: { data: number[] }) {
  return (
    <div className="absolute inset-x-0 bottom-0 flex items-end gap-px">
      {data.map((h, i) => (
        <div key={i} className="flex-1 border-t border-[#0a5c98] bg-[#0f74ba]" style={{ height: h }} />
      ))}
    </div>
  );
}

function Charts() {
  const lab = "absolute top-[4px] font-['Open_Sans',sans-serif] text-[14.5px] leading-[20px] font-bold tracking-[-0.8px] text-[#0bb3a3]";
  return (
    <div className="flex h-[46px] border-t border-b border-[#1b6a94] bg-[#013659]">
      <div className="relative flex-1 border-r-[3px] border-[#1b5d87]">
        <Bars data={cpu} />
        <span className={`${lab} right-[3px]`}>CPU</span>
      </div>
      <div className="relative w-[337px] pr-[2px]">
        <Bars data={ram} />
        <span className={`${lab} right-[4px]`}>RAM</span>
      </div>
    </div>
  );
}

function ModulesIcon() {
  return (
    <svg viewBox="0 0 23 22" className="h-[22px] w-[23px] fill-current">
      <path d="M0 5 H8 V12 H0 Z M0 14 H8 V21.500 H0 Z M9.500 14 H17.500 V21.500 H9.500 Z" />
      <path d="M13 0 L16 3 L13 6 L10 3 Z M19.500 2 L22.700 5.200 L19.500 8.400 L16.300 5.200 Z M14 6.500 L17.300 9.700 L14 13 L10.700 9.700 Z" />
    </svg>
  );
}

function GearsIcon() {
  return (
    <svg viewBox="0 0 18 20" className="h-5 w-[18px]" fill="none" stroke="currentColor">
      <circle cx="6.500" cy="13" r="4" strokeWidth="2.400" />
      <circle cx="6.500" cy="13" r="5.800" strokeWidth="2" strokeDasharray="2.300 2.255" />
      <circle cx="14" cy="4.300" r="2.100" strokeWidth="1.500" />
      <circle cx="14" cy="4.300" r="3.400" strokeWidth="1.300" strokeDasharray="1.340 1.330" />
    </svg>
  );
}

function Stat({ icon, value, last }: { icon: ReactNode; value: string; last?: boolean }) {
  return (
    <div className={`flex h-[34px] w-[79px] items-center rounded-t-[3px] bg-[#0b5183] pt-[2px] pl-[4px] ${last ? "pr-[7px]" : "pr-[6px]"}`}>
      <span className="flex h-[22px] w-[24px] items-center text-[#3d9fd6]">{icon}</span>
      <span className="ml-auto text-right font-['Open_Sans',sans-serif] text-[16.5px] font-semibold tracking-[0.15px] text-[#b4e4fa]">{value}</span>
    </div>
  );
}

type Proc = {
  pid: string;
  name: string;
  args?: string;
  pe?: boolean;
  ser?: boolean;
  danger?: boolean;
  flags?: boolean;
  files: string;
  mods: string;
  gears: string;
  bar: [number, number];
  indent: string;
  arrow?: boolean;
};

const procs: Proc[] = [
  { pid: "2256", name: "some_malicious_file.bin.exe", pe: true, files: "453", mods: "711", gears: "56", bar: [0, 19], indent: "pl-[18px]", arrow: true },
  { pid: "1632", name: "some_malicious_file.bin.exe", pe: true, danger: true, flags: true, files: "123k", mods: "414", gears: "75", bar: [19, 224], indent: "pl-[53px]", arrow: true },
  { pid: "448", name: "cmd.exe", args: "/c vssadmin.exe Delete Shadows /All /Quiet & bcd...", danger: true, files: "540", mods: "19", gears: "16", bar: [37, 4], indent: "pl-[87px]", arrow: true },
  { pid: "412", name: "vssadmin.exe", args: "Delete Shadows /All /Quiet", files: "115", mods: "23", gears: "25", bar: [37, 4], indent: "pl-[122px]" },
  { pid: "3140", name: "bcdedit.exe", args: "/set {default} recoveryenabled No", files: "17", mods: "46", gears: "8", bar: [39, 2], indent: "pl-[122px]" },
  { pid: "2940", name: "bcdedit.exe", args: "/set {default} bootstatuspolicy ignoreallfai...", files: "17", mods: "46", gears: "8", bar: [39, 2], indent: "pl-[122px]" },
  { pid: "2196", name: "vssvc.exe", ser: true, files: "224", mods: "39", gears: "47", bar: [39, 148], indent: "pl-[18px]" },
];

function ProcessRow({ p }: { p: Proc }) {
  return (
    <div className={`flex h-[71px] ${p.indent} pr-[18px]`}>
      <div className="w-[19px] shrink-0 pt-[12px]">
        {p.arrow && (
          <svg viewBox="0 0 14 9" className="h-[9px] w-[14px] fill-[#98d3df]">
            <path d="M0 0 H14 L7 9 Z" />
          </svg>
        )}
      </div>
      <div className={`w-[5px] shrink-0 rounded-l-[2px] ${p.danger ? "bg-[#e34b42]" : "bg-[#7d7d7d]"}`} />
      <div className="flex min-w-0 flex-1 flex-col justify-between overflow-hidden rounded-r-[2px] bg-[#025e8b]">
        <div className="flex h-8 items-center whitespace-nowrap">
          <span className={`flex h-full items-center justify-center bg-[#023358] text-[16px] tracking-[-0.1px] text-[#639dc4] ${p.pid.length === 4 ? "w-[54px]" : "w-[46px]"}`}>{p.pid}</span>
          {p.ser && <span className="flex h-full w-[47px] items-center justify-center bg-[#138fcb] text-[16.500px] font-bold tracking-[-0.3px] text-[#d4f2ff]">SER</span>}
          <span className="ml-[9px] text-[17.400px] text-white">{p.name}</span>
          {p.pe && <span className="mt-px ml-[13px] flex h-[24px] w-[38px] items-center justify-center rounded-[1px] border border-[#1591cf] text-[17px] font-medium tracking-[-0.2px] text-[#c8ecfb]">PE</span>}
          {p.args && <span className="ml-[12px] pt-px text-[17px] tracking-[0.12px] text-[#7cc8f0]">{p.args}</span>}
        </div>
        <div className="flex items-end">
          {p.flags && (
            <div className="mb-[8px] flex flex-1 items-center text-[#6fb0d4]">
              <svg viewBox="0 0 22 19" className="ml-[12px] h-[19px] w-[22px]" fill="none" stroke="currentColor" strokeWidth="2.200">
                <path d="M7 1 L2 6 L7 11 M2 6 H9 M11 6 H13.500 M15 8 L20 13 L15 18 M20 13 H13 M8.500 13 H11" />
              </svg>
              <ShieldIcon className="ml-[8px] h-[22px] w-[18px]" />
              <FaBiohazard className="ml-[8px] h-[23px] w-[23px]" />
              <span className={`${tag} mr-[6px] ml-auto w-[98px]`}>sodinokibi</span>
            </div>
          )}
          <div className="ml-auto w-[243px]">
            <div className="flex justify-between">
              <Stat icon={<MdInsertDriveFile className="h-[26px] w-[26px] shrink-0 -translate-x-[3px]" />} value={p.files} />
              <Stat icon={<ModulesIcon />} value={p.mods} />
              <Stat icon={<span className="pl-[2px]"><GearsIcon /></span>} value={p.gears} last />
            </div>
            <div className="h-1 bg-[#0e2f41]">
              <div className="h-full bg-[#e34b42]" style={{ marginLeft: p.bar[0], width: p.bar[1] }} />
            </div>
          </div>
        </div>
      </div>
    </div>
  );
}

function AnalysisPanel() {
  return (
    <aside className="flex w-[673px] shrink-0 flex-col bg-[#003f6a]">
      <Header />
      <Charts />
      <div className="flex h-[35px] items-center bg-[#012e52] pr-[16px] pl-5 text-[18px]">
        <span className="font-medium tracking-[0.45px] text-[#cfdce5]">Processes</span>
        <span className="ml-[13px] flex h-[25px] w-[244px] items-center rounded-[2px] bg-[#03507a] pl-2 text-[16px] tracking-[-0.1px] text-[#4f8bb0]">Filter by PID or name</span>
        <span className="ml-auto flex h-[21px] w-[22px] items-center justify-center rounded-[3px] bg-[#046f78]">
          <svg viewBox="0 0 16 12" className="h-3 w-4" fill="none" stroke="#02304f" strokeWidth="2.200">
            <path d="M1 6 L6 10.800 L15 1" />
          </svg>
        </span>
        <span className="ml-[15px] tracking-[0.5px] text-[#406c8d]">Only important</span>
      </div>
      <div className="relative flex flex-col gap-[12.500px] pt-1">
        <svg viewBox="0 0 140 520" className="absolute top-0 left-0 h-[520px] w-[140px]" fill="none" stroke="#1a5f87" strokeWidth="1">
          <path d="M21.500 39 V98 Q21.500 102.500 26 102.500 H43" />
          <path d="M56.500 123 V181 Q56.500 186.500 61 186.500 H78" />
          <path d="M91.500 206 V432 Q91.500 436.500 96 436.500 H125" />
          <path d="M91.500 264 Q91.500 269.500 96 269.500 H125 M91.500 347 Q91.500 352.500 96 352.500 H125" />
        </svg>
        {procs.map((p) => (
          <ProcessRow key={p.pid} p={p} />
        ))}
      </div>
    </aside>
  );
}

export default function App() {
  return (
    <div className="flex h-[1335px] w-[2559px] overflow-hidden bg-[#003f6a] font-['Roboto',sans-serif]">
      <Sidebar />
      <div className="flex min-w-0 flex-1 flex-col">
        <div className="flex min-h-0 flex-1">
          <main className="flex w-[1790px] shrink-0 flex-col border-r border-[#012d52]">
            <RemoteDesktop />
            <NetworkPanel />
          </main>
          <AnalysisPanel />
        </div>
        <BottomBar />
      </div>
    </div>
  );
}
